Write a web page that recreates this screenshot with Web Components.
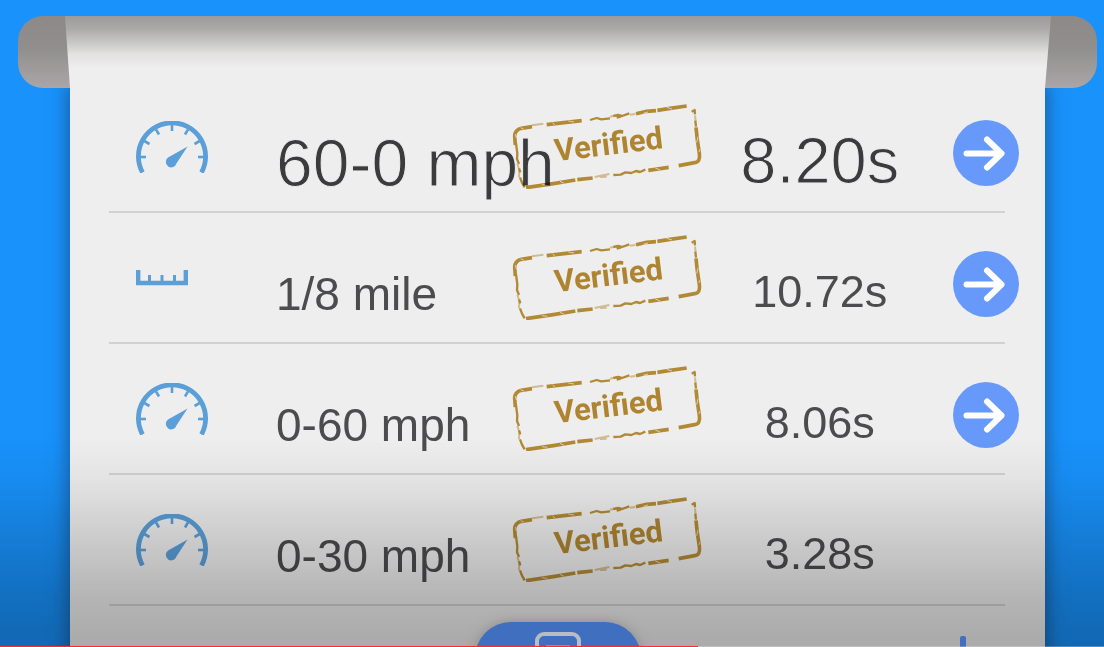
<!DOCTYPE html>
<html lang="en">
<head>
<meta charset="utf-8">
<title>Verified runs</title>
<style>
html, body { margin: 0; height: 100%; }
body { font-family: "Liberation Sans", Arial, sans-serif; background: #1992fb; overflow: hidden; }
</style>
</head>
<body>
<results-screen>
  <run-row size="large" icon="gauge" link><span slot="name">60-0 mph</span><span slot="time">8.20s</span></run-row>
  <run-row icon="ruler" link><span slot="name">1/8 mile</span><span slot="time">10.72s</span></run-row>
  <run-row icon="gauge" link><span slot="name">0-60 mph</span><span slot="time">8.06s</span></run-row>
  <run-row icon="gauge"><span slot="name">0-30 mph</span><span slot="time">3.28s</span></run-row>
</results-screen>
<script>
class ShadowElement extends HTMLElement {
  constructor() {
    super();
    this.attachShadow({ mode: "open" });
  }
  connectedCallback() { this.shadowRoot.innerHTML = this.markup(); }
}

customElements.define("run-icon", class extends ShadowElement {
  markup() {
    const ticks = [0, 30, 60, 90, 120, 150, 180]
      .map(a => `<path d="M4 36H10" transform="rotate(${a} 36 36)"/>`).join("");
    const gauge = `<svg width="72" height="52" viewBox="0 0 72 52" fill="none" stroke="#5a9fd8">
      <path d="M6.5 51.5A33.6 33.6 0 1 1 65.5 51.5" stroke-width="4.8"/>
      <g stroke-width="2.6">${ticks}</g>
      <path d="M51.6 25.4L40.4 42.400A5.400 5.400 0 1 1 32 36.600Z" fill="#5a9fd8" stroke="none"/></svg>`;
    const ruler = `<svg width="52" height="16" viewBox="0 0 52 16" fill="none" stroke="#5a9fd8">
      <path d="M2.2 0V13H49.8V0" stroke-width="4.4"/>
      <path d="M13.5 5V12M26 5V12M38.5 5V12" stroke-width="3"/></svg>`;
    return `<style>:host{display:block} svg{display:block}</style>${this.getAttribute("kind") === "ruler" ? ruler : gauge}`;
  }
});

customElements.define("verified-stamp", class extends ShadowElement {
  markup() {
    return `<style>
      :host { display: grid; width: 190px; height: 90px; }
      svg, span { grid-area: 1 / 1; }
      span { place-self: center; color: #ae8430; font: 700 31px/34px Roboto, sans-serif; transform: rotate(-7deg); padding: 2px 0 0 4px; }
    </style>
    <svg width="190" height="90" viewBox="36 27 570 270" fill="none" stroke="#b28a35" stroke-linejoin="round">
      <g stroke-width="11">
        <path d="M46 165L44 138Q45 120 64 115L96 110"/>
        <path d="M140 104L192 98L245 92"/>
        <path d="M408 71L440 64L468 62M472 61L510 55L560 48"/>
        <path d="M588 112L592 150L598 190Q602 216 584 218L536 227"/>
        <path d="M506 232L445 241"/>
        <path d="M278 264L232 269M226 270L160 281L78 293"/>
      </g>
      <g stroke-width="7">
        <path d="M270 90L290 84L304 88L330 85M340 78L354 75L366 78L388 70M350 83L362 80"/>
        <path d="M436 239L420 246L408 243L394 249L376 247L362 254L340 255"/>
        <path d="M48 160L52 190L51 207L57 222M57 235L61 247M60 262L66 278L74 292"/>
        <path d="M575 65L584 60L585 73M586 92L588 110"/>
      </g>
      <g stroke-width="6" opacity=".5">
        <path d="M96 106L130 101M330 80L342 77M390 74L406 72M585 76L587 94M328 252L284 261M320 260L300 261M52 222L58 240L57 262"/>
      </g>
      <g stroke="#ecebea" stroke-width="3" opacity=".7">
        <path d="M158 98L164 105M205 93L222 96M430 70L444 66M500 52L516 57M594 140L590 158M599 178L597 186M466 234L480 240M126 284L142 286M180 274L192 280M62 113L72 118M46 132L49 144"/>
      </g>
    </svg><span>Verified</span>`;
  }
});

customElements.define("arrow-button", class extends ShadowElement {
  markup() {
    return `<style>
      :host { display: block; }
      button { display: block; width: 66px; height: 66px; margin: 0; padding: 0; border: 0; border-radius: 50%; background: #6699fa; cursor: pointer; }
      svg { display: block; }
    </style>
    <button type="button" aria-label="Open run"><svg width="66" height="66" viewBox="0 0 66 66" fill="none" stroke="#fff" stroke-width="6" stroke-linecap="round" stroke-linejoin="round"><path d="M13.5 33.5H48.5M34 19.5L48.500 33.5L34 47.500"/></svg></button>`;
  }
});

customElements.define("run-row", class extends ShadowElement {
  markup() {
    return `<style>
      :host { display: grid; grid-template-columns: 166px minmax(0, 1fr) 190px minmax(0, 1fr) 67px; align-items: center;
        box-sizing: border-box; height: 131px; border-bottom: 2px solid #cfd2d0; color: #4c4b4e; font-size: 45px; line-height: 52px; white-space: nowrap; }
      :host([size=large]) { font-size: 65px; line-height: 74px; color: #3b3a3d; }
      :host([size=large]) .text { -webkit-text-stroke: 1px #efeeef; mix-blend-mode: multiply; }
      run-icon { margin-left: 27px; }
      .name { padding: 33px 0 0 1px; font-size: 46px; }
      :host([size=large]) .name { font-size: 66px; }
      .time { padding-top: 28px; display: flex; justify-content: center; }
      verified-stamp { margin-bottom: 5px; }
      arrow-button { margin: 13px 0 0 15px; }
    </style>
    <run-icon kind="${this.getAttribute("icon")}"></run-icon>
    <div class="text name"><slot name="name"></slot></div>
    <verified-stamp></verified-stamp>
    <div class="text time"><slot name="time"></slot></div>
    ${this.hasAttribute("link") ? "<arrow-button></arrow-button>" : ""}`;
  }
});

customElements.define("paper-roll", class extends ShadowElement {
  markup() {
    return `<style>
      :host { display: block; height: 72px; margin: 16px 7px 0 18px; border-radius: 25px; padding: 0 46px 0 47px;
        background: linear-gradient(#8c8987, #918f8e 45%, #aaa6a8); }
      div { height: 100%; clip-path: polygon(0 0, 100% 0, calc(100% - 6px) 100%, 5px 100%);
        background: linear-gradient(#9c9a9a, #acaaa9 18%, #c9cac7 38%, #e2e0e0 52%, #efeeef 72%); }
    </style><div></div>`;
  }
});

customElements.define("tab-bar", class extends ShadowElement {
  markup() {
    return `<style>
      :host { display: grid; grid-template-columns: 1fr 166px 1fr; height: 60px; margin-top: 16px; }
      button { margin: 0; padding: 0; border: 0; background: none; display: flex; justify-content: center; }
      .main { grid-column: 2; background: #416fc0; border-radius: 36px 36px 0 0; box-shadow: 0 0 12px #7779; padding-top: 10px; }
      .add { justify-content: flex-end; padding: 14px 79px 0 0; }
      svg { display: block; }
    </style>
    <button class="main" type="button" aria-label="Results"><svg width="46" height="46" viewBox="0 0 46 46" fill="none" stroke="#b9bcc2" stroke-width="4"><rect x="2" y="2" width="42" height="42" rx="7"/><path d="M11 15H35" stroke-width="3"/></svg></button>
    <button class="add" type="button" aria-label="Add"><svg width="6" height="24" viewBox="0 0 6 24"><rect width="6" height="24" rx="2" fill="#446fbe"/></svg></button>`;
  }
});

customElements.define("play-progress", class extends ShadowElement {
  markup() {
    return `<style>
      :host { position: fixed; inset: auto 0 0 0; height: 1px; background: #ffffff40; }
      div { width: 63.2%; height: 1px; background: #ff2a2e; }
    </style><div></div>`;
  }
});

customElements.define("results-screen", class extends ShadowElement {
  markup() {
    return `<style>
      :host { display: flex; flex-direction: column; height: 100vh; overflow: hidden; }
      paper-roll { flex: none; position: relative; z-index: 1; }
      main { flex: 1 0 auto; margin: 0 59px 0 70px; background: #efeeef; box-shadow: 0 0 16px 3px #17406e99; }
      .list { position: relative; z-index: 2; margin: -6px 40px 0 39px; }
      .shade { position: fixed; inset: 0; z-index: 2; pointer-events: none;
        background: linear-gradient(to top, #00000049, #0000003d 50px, #00000024 110px, #0000000a 170px, transparent 210px); }
      tab-bar, play-progress { z-index: 3; }
      tab-bar { position: relative; }
    </style>
    <paper-roll></paper-roll>
    <main><div class="list"><slot></slot></div><tab-bar></tab-bar></main>
    <div class="shade"></div>
    <play-progress></play-progress>`;
  }
});
</script>
</body>
</html>
